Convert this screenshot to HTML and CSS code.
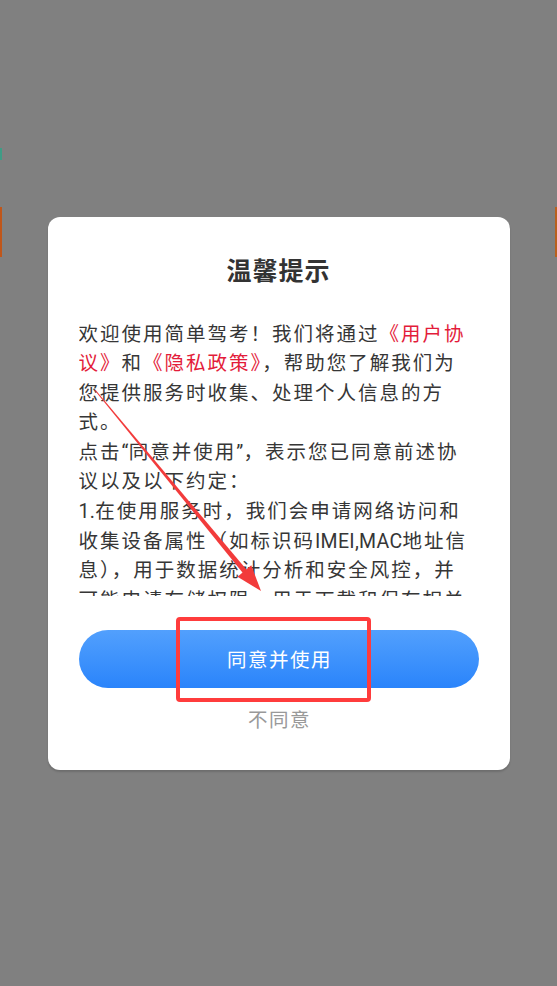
FILE: index.html
```html
<!DOCTYPE html>
<html lang="zh-CN">
<head>
  <meta charset="UTF-8" />
  <meta name="viewport" content="width=device-width, initial-scale=1" />
  <title>温馨提示</title>
  <link rel="stylesheet" href="styles.css">
</head>
<body>

  <!-- Privacy dialog -->
  <div class="mask">
    <div class="dialog">
      <h1 class="title">温馨提示</h1>

      <div class="content">
        欢迎使用简单驾考！我们将通过<a class="link">《用户协</a><br>
        <a class="link">议》</a>和<a class="link">《隐私政策》</a>，帮助您了解我们为<br>
        您提供服务时收集、处理个人信息的方<br>
        式。<br>
        点击<span class="latin">“</span>同意并使用<span class="latin">”</span>，表示您已同意前述协<br>
        议以及以下约定：<br>
        <span class="latin">1.</span>在使用服务时，我们会申请网络访问和<br>
        收集设备属性（如标识码<span class="latin">IMEI,MAC</span>地址信<br>
        息），用于数据统计分析和安全风控，并<br>
        可能申请存储权限，用于下载和保存相关<br>
        数据与文件。<br>
        <span class="latin">2.</span>我们会采取业界先进的安全措施保护您<br>
        的信息安全。
      </div>

      <button class="agree">同意并使用</button>
      <p class="disagree">不同意</p>
    </div>
  </div>

  <!-- Annotation -->
  <div class="mark-box"></div>
  <svg class="mark-arrow" width="557" height="986" viewBox="0 0 557 986">
    <polygon fill="#f23b3b" points="94.6,390.3 95.4,389.7 248.9,572.5 245.1,575.7" />
    <polygon fill="#f23b3b" points="261,591 237.5,576.7 251.3,565.3" />
  </svg>

</body>
</html>
```

FILE: styles.css
```css
body {
  margin: 0;
  padding: 0;
  font-family: Roboto, "Noto Sans CJK SC", sans-serif;
  background:
    linear-gradient(#3f9c86, #3f9c86) 0 148px / 2px 12px no-repeat,
    linear-gradient(#c0561a, #c0561a) 0 207px / 2px 50px no-repeat,
    linear-gradient(#b8601e, #b8601e) 555px 207px / 2px 50px no-repeat,
    #808080;
}

.mask {
  min-height: 100vh;
  display: flex;
  align-items: center;
  justify-content: center;
}

.dialog {
  width: 462px;
  box-sizing: border-box;
  padding: 38px 31px 36px;
  background: #fff;
  border-radius: 12px;
  box-shadow: 0 2px 2px rgba(0, 0, 0, 0.15);
}

.title {
  margin: 0 0 29px;
  font-size: 25px;
  line-height: 34px;
  font-weight: bold;
  letter-spacing: 1px;
  text-align: center;
  color: #333;
}

.content {
  height: 278px;
  overflow: hidden;
  font-family: "Noto Sans CJK SC", sans-serif;
  font-size: 19.5px;
  line-height: 29.6px;
  letter-spacing: 2px;
  white-space: nowrap;
  color: #363636;
}

.latin {
  font-family: Roboto, sans-serif;
  line-height: 1;
  letter-spacing: 0.3px;
}

.link {
  color: #e31c3a;
}

.agree {
  display: block;
  width: 400px;
  height: 58px;
  margin: 34px auto 0;
  padding: 0 0 0 2px;
  border: none;
  border-radius: 29px;
  background: linear-gradient(#52a0fd, #2a84fb);
  color: #fff;
  font-family: "Noto Sans CJK SC", sans-serif;
  font-size: 19.5px;
  letter-spacing: 1.5px;
  cursor: pointer;
}

.disagree {
  margin: 16px 0 0;
  padding-left: 2px;
  font-family: "Noto Sans CJK SC", sans-serif;
  font-size: 19.5px;
  line-height: 30px;
  letter-spacing: 1.5px;
  text-align: center;
  color: #999;
}

.mark-box {
  position: absolute;
  left: 176px;
  top: 617px;
  width: 195px;
  height: 85px;
  box-sizing: border-box;
  border: 4px solid #ff3c3c;
  border-radius: 4px;
}

.mark-arrow {
  position: absolute;
  left: 0;
  top: 0;
  pointer-events: none;
}
```
